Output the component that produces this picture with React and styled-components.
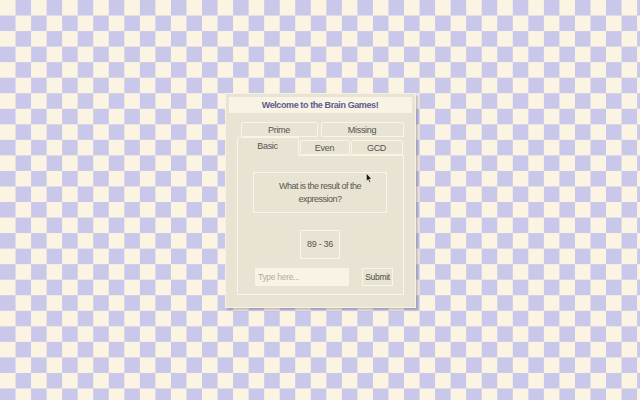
import React from "react"
import styled, { createGlobalStyle } from "styled-components"

const GlobalStyle = createGlobalStyle`
  html, body {
    margin: 0;
    padding: 0;
  }
  body {
    background: repeating-conic-gradient(#c9c8ea 0 25%, #fcf4e2 0 50%) 0 0 / 31.08px 31.08px;
    font-family: "Liberation Sans", Arial, sans-serif;
  }
`

const Page = styled.div`
  width: 640px;
  height: 400px;
  display: flex;
  align-items: center;
  justify-content: center;
`

const Window = styled.div`
  position: relative;
  width: 191px;
  box-sizing: border-box;
  background: #e9e3d4;
  border: 1px solid #f6f1e3;
  box-shadow: 2px 2px 2px rgba(90, 80, 110, 0.35);
  padding: 3px 3px 12px;
`

const TitleBar = styled.div`
  height: 16px;
  background: #f8f3e5;
  color: #5d5b8c;
  font-weight: bold;
  font-size: 9px;
  letter-spacing: -0.4px;
  line-height: 16px;
  text-align: center;
`

const Body = styled.div`
  padding: 9px 8px 0;
`

const TabRow = styled.div`
  display: flex;
  gap: ${p => p.gap || 0}px;
  padding-left: ${p => p.indent || 0}px;
  align-items: flex-end;
  height: ${p => p.height}px;
  position: relative;
  z-index: ${p => p.layer || 0};
`

const Tab = styled.div`
  box-sizing: border-box;
  width: ${p => p.w}px;
  height: ${p => (p.active ? 19 : 15)}px;
  background: #e9e3d4;
  border: 1px solid #f8f4e8;
  border-bottom: ${p => (p.active ? "none" : "1px solid #f8f4e8")};
  border-radius: 2px 2px 0 0;
  color: #555450;
  font-size: 9px;
  letter-spacing: -0.3px;
  line-height: ${p => (p.active ? 17 : 14)}px;
  text-align: center;
  margin-bottom: ${p => (p.active ? -1 : 0)}px;
  position: relative;
  z-index: ${p => (p.active ? 2 : 0)};
`

const Panel = styled.div`
  box-sizing: border-box;
  border: 1px solid #f8f4e8;
  height: 140px;
  display: flex;
  flex-direction: column;
  align-items: center;
  padding-top: 16px;
`

const Question = styled.div`
  box-sizing: border-box;
  width: 134px;
  height: 41px;
  border: 1.5px solid #f8f4e8;
  color: #57564f;
  font-size: 9px;
  letter-spacing: -0.5px;
  line-height: 13px;
  text-align: center;
  padding: 2px 24px 0;
  display: flex;
  align-items: center;
  justify-content: center;
`

const Expression = styled.div`
  box-sizing: border-box;
  width: 40px;
  height: 29px;
  margin-top: 17px;
  border: 1.5px solid #f8f4e8;
  color: #57564f;
  font-size: 9px;
  letter-spacing: -0.3px;
  display: flex;
  align-items: center;
  justify-content: center;
`

const AnswerRow = styled.div`
  display: flex;
  gap: 13px;
  margin-top: 9px;
  margin-left: 8px;
`

const Input = styled.input`
  box-sizing: border-box;
  width: 94px;
  height: 18px;
  border: none;
  outline: none;
  background: #f8f3e5;
  padding: 0 3px;
  font-family: inherit;
  font-size: 8.5px;
  letter-spacing: -0.3px;
  color: #555;
  &::placeholder {
    color: #b0aca2;
  }
`

const Button = styled.button`
  box-sizing: border-box;
  width: 31px;
  height: 18px;
  padding: 0;
  background: #e9e3d4;
  border: 1.5px solid #f8f4e8;
  font-family: inherit;
  font-size: 8.5px;
  letter-spacing: -0.3px;
  color: #4c4b46;
`

const Cursor = styled.svg`
  position: absolute;
  left: 140px;
  top: 79px;
  width: 6px;
  height: 10px;
`

const App = () => {
  return (
    <Page>
      <GlobalStyle />
      <Window>
        <TitleBar>Welcome to the Brain Games!</TitleBar>
        <Body>
          <TabRow height={15} indent={4} gap={3}>
            <Tab w={77}>Prime</Tab>
            <Tab w={83}>Missing</Tab>
          </TabRow>
          <TabRow height={18} gap={1} layer={1}>
            <Tab w={62} active>Basic</Tab>
            <Tab w={50}>Even</Tab>
            <Tab w={52}>GCD</Tab>
          </TabRow>
          <Panel>
            <Question>What is the result of the expression?</Question>
            <Expression>89 - 36</Expression>
            <AnswerRow>
              <Input placeholder="Type here..." />
              <Button>Submit</Button>
            </AnswerRow>
          </Panel>
        </Body>
        <Cursor viewBox="0 0 6 10">
          <path d="M0.5 0.5 L0.5 8 L2.2 6.4 L3.6 9.5 L4.6 9 L3.3 6 L5.5 6 Z" fill="#111" stroke="#fff" strokeWidth="0.4" />
        </Cursor>
      </Window>
    </Page>
  )
}

export default App
